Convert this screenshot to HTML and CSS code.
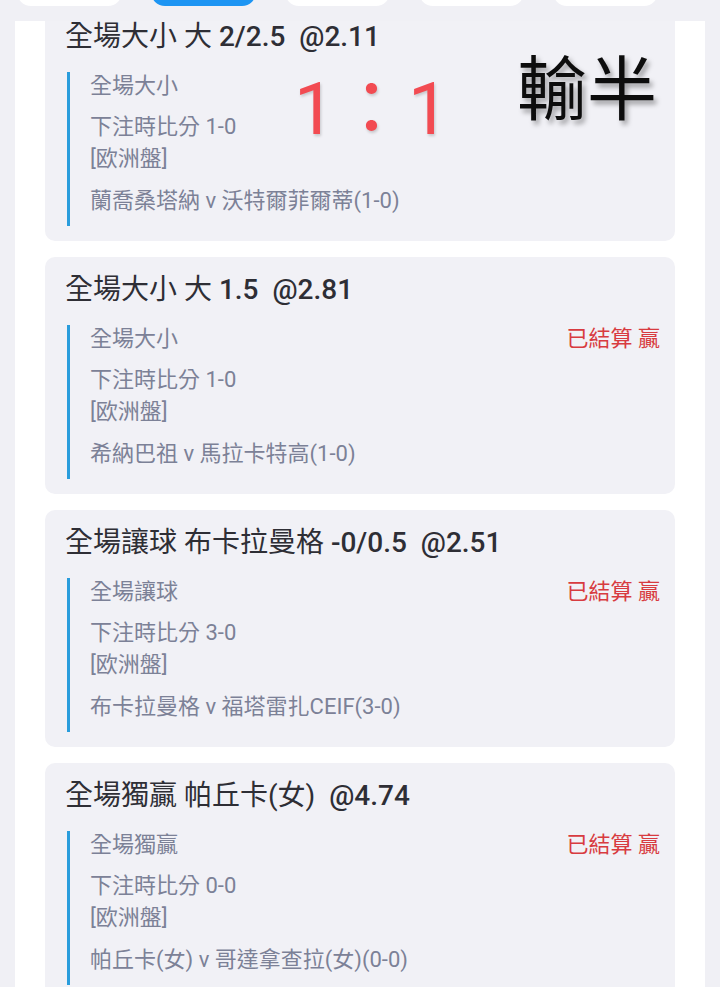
FILE: index.html
```html
<!DOCTYPE html>
<html lang="zh-Hant">
<head>
<meta charset="utf-8">
<title>注單</title>
<link rel="stylesheet" href="styles.css">
</head>
<body>
<div class="tabbar">
  <div class="tab"></div>
  <div class="tab active"></div>
  <div class="tab"></div>
  <div class="tab"></div>
  <div class="tab"></div>
</div>
<main class="panel">
  <section class="card first">
    <div class="title">全場大小 大 <span class="num">2/2.5  @2.11</span></div>
    <div class="detail">
      <div class="row"><span>全場大小</span></div>
      <div class="mid">下注時比分 1-0<br>[欧洲盤]</div>
      <div class="teams">蘭喬桑塔納 v 沃特爾菲爾蒂(1-0)</div>
    </div>
    <div class="note score">1：1</div>
    <div class="note verdict">輸半</div>
  </section>
  <section class="card">
    <div class="title">全場大小 大 <span class="num">1.5  @2.81</span></div>
    <div class="detail">
      <div class="row"><span>全場大小</span><span class="status">已結算 贏</span></div>
      <div class="mid">下注時比分 1-0<br>[欧洲盤]</div>
      <div class="teams">希納巴祖 v 馬拉卡特高(1-0)</div>
    </div>
  </section>
  <section class="card">
    <div class="title">全場讓球 布卡拉曼格 <span class="num">-0/0.5  @2.51</span></div>
    <div class="detail">
      <div class="row"><span>全場讓球</span><span class="status">已結算 贏</span></div>
      <div class="mid">下注時比分 3-0<br>[欧洲盤]</div>
      <div class="teams">布卡拉曼格 v 福塔雷扎CEIF(3-0)</div>
    </div>
  </section>
  <section class="card">
    <div class="title">全場獨贏 帕丘卡(女) <span class="num"> @4.74</span></div>
    <div class="detail">
      <div class="row"><span>全場獨贏</span><span class="status">已結算 贏</span></div>
      <div class="mid">下注時比分 0-0<br>[欧洲盤]</div>
      <div class="teams">帕丘卡(女) v 哥達拿查拉(女)(0-0)</div>
    </div>
  </section>
</main>
</body>
</html>
```
FILE: styles.css
```css
html, body {
  margin: 0;
  padding: 0;
}
body {
  background: #f0f0f5;
  height: 987px;
  overflow: hidden;
  font-family: Roboto, "Noto Sans CJK TC", sans-serif;
}
.tabbar {
  height: 21px;
  overflow: hidden;
  display: flex;
  gap: 29px;
  padding-left: 17px;
}
.tab {
  flex: 0 0 105px;
  height: 40px;
  margin-top: -34px;
  background: #ffffff;
  border-radius: 14px;
}
.tab.active {
  background: #1d95f3;
}
.panel {
  margin: 0 15px;
  background: #ffffff;
  padding: 0 30px;
  height: 966px;
  overflow: hidden;
}
.card {
  position: relative;
  background: #f1f1f6;
  border-radius: 10px;
  padding: 17px 15px 15px 20px;
  margin-bottom: 16px;
}
.card.first {
  margin-top: -17px;
}
.title {
  font-size: 28px;
  line-height: 32px;
  color: #2e2e35;
  white-space: pre;
}
.num {
  font-weight: 500;
}
.detail {
  margin-top: 19px;
  margin-left: 2px;
  border-left: 3px solid #2a9ddc;
  padding: 0 0 11px 20px;
  font-size: 22px;
  color: #7c8197;
}
.row {
  display: flex;
  justify-content: space-between;
  line-height: 28px;
}
.status {
  color: #d83b40;
}
.mid {
  margin-top: 11px;
  line-height: 32px;
}
.teams {
  margin-top: 12px;
  line-height: 28px;
}
.note {
  position: absolute;
  line-height: 1;
  white-space: nowrap;
}
.score {
  left: 249px;
  top: 69px;
  font-size: 73px;
  color: #f24b52;
  text-shadow: 1px 2px 3px rgba(0, 0, 0, 0.18);
}
.verdict {
  left: 472px;
  top: 46px;
  font-size: 70px;
  color: #0d0d0d;
  font-family: "Noto Sans CJK TC", sans-serif;
  text-shadow: 3px 4px 5px rgba(0, 0, 0, 0.35);
}
```
